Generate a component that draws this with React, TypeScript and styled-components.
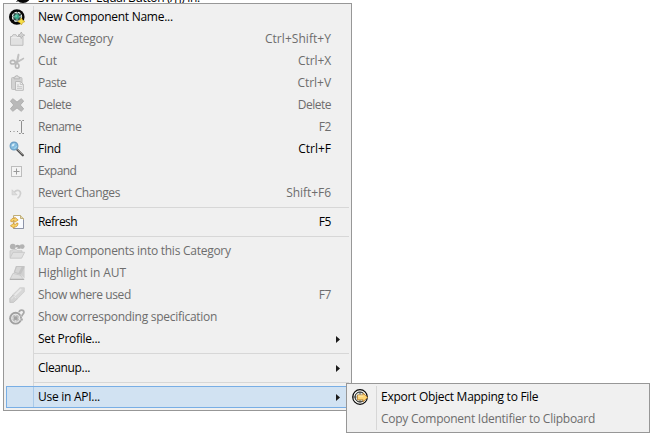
import React from 'react';
import styled, { createGlobalStyle, css } from 'styled-components';

const GlobalStyle = createGlobalStyle`
  body {
    margin: 0;
    background: #fff;
    overflow: hidden;
  }
`;

const Page = styled.main`
  position: relative;
  width: 659px;
  height: 443px;
  overflow: hidden;
  font-family: 'Open Sans', 'Noto Sans', sans-serif;
  font-size: 12px;
  color: #000;
  cursor: default;
  user-select: none;
`;

const TreeLine = styled.div`
  display: flex;
  height: 3px;
  padding-left: 15px;
  overflow: hidden;
`;

const TreeIcon = styled.svg`
  flex: none;
  width: 16px;
  height: 16px;
  margin-top: -13px;
`;

const TreeText = styled.span`
  margin: -11px 0 0 7px;
  line-height: 18px;
  white-space: pre;
  letter-spacing: -0.36px;
`;

const menuPanel = css`
  box-sizing: border-box;
  position: absolute;
  display: flex;
  flex-direction: column;
  padding: 2px;
  border: 1px solid #979797;
  background: #f0f0f0;
`;

const ContextMenu = styled.div`
  ${menuPanel}
  left: 3px;
  top: 3px;
  width: 349px;
  height: 408px;
`;

const SubMenu = styled.div`
  ${menuPanel}
  left: 346px;
  top: 383px;
  width: 304px;
  height: 50px;
`;

const Gutter = styled.span`
  box-sizing: border-box;
  display: flex;
  flex: none;
  align-items: center;
  width: 28px;
  height: 100%;
  padding-left: 3px;
  border-right: 1px solid #d7d7d7;
`;

const Row = styled.div<{ $disabled?: boolean; $selected?: boolean }>`
  box-sizing: border-box;
  display: flex;
  flex: none;
  align-items: center;
  height: 22px;
  color: ${(p) => (p.$disabled ? '#6d6d6d' : '#000')};
  ${(p) =>
    p.$selected &&
    css`
      background: #d1e2f2;
      box-shadow: inset 0 0 0 1px #78aee5;
      ${Gutter} {
        height: 20px;
        border-color: #a9c9e8;
      }
    `}
`;

const Label = styled.span<{ $track: number }>`
  flex: 1;
  padding-left: 4px;
  line-height: 20px;
  white-space: nowrap;
  letter-spacing: ${(p) => p.$track}px;
`;

const Shortcut = styled.span<{ $track: number }>`
  padding-right: 18px;
  line-height: 20px;
  letter-spacing: ${(p) => p.$track}px;
`;

const Arrow = styled.svg`
  flex: none;
  width: 4px;
  height: 7px;
  margin-right: 9px;
  fill: #1a1a1a;
`;

const SeparatorRow = styled.div`
  display: flex;
  flex: none;
  align-items: center;
  height: 7px;
`;

const Rule = styled.span`
  flex: 1;
  height: 1px;
  background: #d7d7d7;
`;

const IconBox = styled.svg`
  flex: none;
  width: 16px;
  height: 16px;
`;

const icons: Record<string, React.ReactNode> = {
  component: (
    <>
      <circle cx="7.8" cy="8" r="7.8" fill="#050505" />
      <circle cx="8" cy="7.8" r="4.6" fill="#31504b" stroke="#f0f5f3" strokeWidth="1.1" strokeDasharray="2.6 1.1" />
      <path d="M8 3v10M3 7.8h10" stroke="#b5c8c3" strokeWidth="1" />
      <circle cx="7.8" cy="7.7" r="2.4" fill="#35aa8a" />
      <circle cx="7.2" cy="7.1" r="1.1" fill="#68cbb0" />
      <path d="M12.3 8.8l1.3 2.3 2.4 1.4-2.4 1.3-1.3 2.2-1.3-2.2-2.4-1.3 2.4-1.4z" fill="#f7df45" stroke="#c29a20" strokeWidth=".6" />
    </>
  ),
  category: (
    <>
      <path d="M1.5 5.5H3l1-1.8h3l1 1.8h6v8.8H1.5z" fill="#e1e1e1" stroke="#bdbdbd" />
      <path d="M2.5 6.7h10.8" stroke="#efefef" />
      <path d="M12.3 1l1 2.2 2.4 1-2.4 1-1 2.3-1-2.3-2.3-1 2.3-1z" fill="#eee" stroke="#aaa" strokeWidth=".8" />
      <path d="M12.3 2.7v3M10.8 4.2h3" stroke="#bbb" strokeWidth=".6" />
    </>
  ),
  cut: (
    <g fill="none" stroke="#b8b8b8">
      <path d="M9.2 1l.9.5-1.4 7.7-1.5.9zM14.7 5l-.2 1.1L7 10.3l-1-.6z" fill="#cdcdcd" strokeWidth=".8" />
      <ellipse cx="3.8" cy="9.2" rx="2.4" ry="1.8" strokeWidth="1.6" />
      <ellipse cx="8.2" cy="13" rx="1.8" ry="2.2" strokeWidth="1.6" />
    </g>
  ),
  paste: (
    <>
      <rect x="2.5" y="2.5" width="10.5" height="12" rx="1" fill="#d2d2d2" stroke="#c0c0c0" />
      <path d="M5 3.8V2h1.3l.5-1.2h2L9.3 2h1.3v1.8z" fill="#dedede" stroke="#afafaf" strokeWidth=".8" />
      <path d="M6.5 6.5h5l2.8 2.8v6H6.5z" fill="#eee" stroke="#b9b9b9" />
      <path d="M11.3 6.5v3h3M8 10h2M8 11.7h5M8 13.4h5" fill="none" stroke="#bcbcbc" strokeWidth=".8" />
    </>
  ),
  delete: (
    <path
      d="M3.9 1.7L8 5.1l4.2-3.4 2.5 2.4L11.3 8l3.4 3.9-2.5 2.4L8 10.9l-4.1 3.4-2.5-2.4L4.7 8 1.4 4.1z"
      fill="#b9b9b9"
      stroke="#ababab"
      strokeWidth=".9"
      strokeLinejoin="round"
    />
  ),
  rename: (
    <>
      <path d="M1 12h1v1H1zM4.5 12h1v1h-1zM8 12h1v1H8z" fill="#888" />
      <path d="M10 1.5h1.5l1 1 1-1H15M12.5 2.5v11M10 14.5h1.5l1-1 1 1H15" fill="none" stroke="#8e8e8e" />
    </>
  ),
  find: (
    <>
      <path d="M7.8 8.3l6 6" stroke="#4b4b4b" strokeWidth="2.2" strokeLinecap="round" />
      <path d="M8.3 8.2l5.3 5.2" stroke="#b4b0aa" strokeWidth=".9" />
      <circle cx="5" cy="5" r="3.9" fill="#83bbdf" stroke="#6b9cc2" strokeWidth="1.1" />
      <path d="M2.6 5.4C2.6 3.5 4 2.4 5.8 2.6L4.9 4.9z" fill="#d7edf8" />
      <path d="M4.8 7.4A3 3 0 0 0 7.5 5" fill="none" stroke="#a9dcf0" strokeWidth="1" />
    </>
  ),
  expand: (
    <>
      <rect x="2.5" y="3.5" width="10" height="10" fill="#f4f4f4" stroke="#bdbdbd" />
      <path d="M4.5 8.5h6M7.5 5.5v6" stroke="#999" />
    </>
  ),
  revert: (
    <>
      <path d="M5.2 7.2C8 3.7 12 5.5 11.5 9c-.3 2.2-1.6 3.4-3 4.4" fill="none" stroke="#cfcfcf" strokeWidth="1.7" />
      <path d="M3.1 4.8v5h5z" fill="#dcdcdc" stroke="#cacaca" strokeWidth=".7" />
    </>
  ),
  refresh: (
    <>
      <path d="M4.5 1.5h7l3 3v10h-10z" fill="#f9fbff" stroke="#bfae78" />
      <path d="M11.5 1.5v3h3" fill="#e7dba7" stroke="#b2a06c" strokeWidth=".8" />
      <path d="M4.5 14.5h10V6" fill="none" stroke="#828db5" strokeWidth=".8" />
      <path d="M1.6 7.3C1.8 4.6 4 3.8 5.6 4.6l.1-1.4L9.2 6 5.6 8.3V6.8C4.4 6.3 3.5 6.8 3.4 8z" fill="#f7d568" stroke="#cb8d2b" strokeWidth=".7" />
      <path d="M9 9.1c.2 3-1.9 4.3-3.8 3.7v1.4L1.4 11.8l3.8-2.7v1.6c1.2.3 1.9-.3 2-1.5z" fill="#f7d568" stroke="#cb8d2b" strokeWidth=".7" />
    </>
  ),
  map: (
    <>
      <circle cx="3.8" cy="3.6" r="2.9" fill="#b3b3b3" />
      <path d="M6.5 2.6q2.2-1.6 4 0l1-1v4.2H7.8L9 4.6Q7.8 3.8 6.5 4.4z" fill="#acacac" />
      <circle cx="13.2" cy="3.6" r="2.4" fill="#b3b3b3" />
      <path d="M1 14.6V7.7h2.2L4.4 6.5h3l1 1.2h4.6v2" fill="#dadada" stroke="#c6c6c6" strokeWidth=".8" />
      <path d="M1 15.2L4 9.3h11.6l-3 5.9z" fill="#e0e0e0" stroke="#c4c4c4" strokeWidth=".8" />
    </>
  ),
  highlight: (
    <>
      <path d="M7 1h8.6v12.6L11.4 9.8 5 7.8z" fill="#d0d0d0" />
      <path d="M7 1L4.6 7.6l6.8 2.2L15.4 3V1z" fill="#c3c3c3" />
      <path d="M7.8 2L6.2 6.9l3.3 1L12.6 2z" fill="#d5d5d5" />
      <path d="M4 8.3l7.2 1.8 3.3 4.1H1z" fill="#dedede" stroke="#c1c1c1" strokeWidth=".8" />
      <path d="M.8 14.4h14.4" stroke="#adadad" />
    </>
  ),
  where: (
    <>
      <path d="M10.9.8h4.4v4L8 12.2 3.6 8z" fill="#d8d8d8" stroke="#c9c9c9" strokeWidth=".7" />
      <path d="M12.2 2.2L5.8 8.3" stroke="#e9e9e9" strokeWidth="1.8" />
      <path d="M4 8l4.2 4.1-3.7 3.3H.8v-4z" fill="#d2d2d2" stroke="#c0c0c0" strokeWidth=".8" />
      <path d="M4.6 8.8l2.8 2.7M2.4 12l2.2-2.1" stroke="#e9e9e9" />
    </>
  ),
  spec: (
    <>
      <circle cx="6.6" cy="9.2" r="6.4" fill="#a0a0a0" />
      <circle cx="6.7" cy="9.2" r="4" fill="#bdbdbd" stroke="#e9e9e9" strokeWidth="1.1" />
      <path d="M6.7 5.2v8M2.7 9.2h8" stroke="#e0e0e0" />
      <circle cx="6.7" cy="9.2" r="1.9" fill="#a2a2a2" />
      <path d="M10 3.3Q10.3 1 12.7 1q2.6 0 2.6 2.3c0 2-2.2 2-2.2 4.1M13.1 9.5v2" fill="none" stroke="#efefef" strokeWidth="3.2" />
      <path d="M10.2 3.3Q10.3 1.2 12.6 1.2q2.3 0 2.3 2c0 2-2 2-2 4.2M12.9 9.5v2" fill="none" stroke="#a8a8a8" strokeWidth="1.8" />
    </>
  ),
  export: (
    <>
      <circle cx="8" cy="8" r="7.3" fill="#f5f5f1" stroke="#080808" strokeWidth="1.2" />
      <circle cx="8" cy="8" r="5" fill="#dde5e0" stroke="#161616" strokeWidth="1" />
      <path d="M8 3v2.6M8 11v2.4M1 8h3.5" stroke="#333" strokeWidth=".8" />
      <path d="M5.5 6h5.6V4L15.6 8.4 11.1 12.8v-2H5.5z" fill="#ffd675" stroke="#b67a28" strokeWidth=".8" />
      <path d="M6.2 7h5" stroke="#fff3bf" />
    </>
  ),
};

interface Item {
  label: string;
  track: number;
  icon?: string;
  keys?: string;
  keyTrack?: number;
  disabled?: boolean;
  selected?: boolean;
  submenu?: boolean;
}

const groups: Item[][] = [
  [
    { label: 'New Component Name...', track: -0.27, icon: 'component' },
    { label: 'New Category', track: -0.26, icon: 'category', keys: 'Ctrl+Shift+Y', keyTrack: 0.05, disabled: true },
    { label: 'Cut', track: -0.1, icon: 'cut', keys: 'Ctrl+X', keyTrack: -0.1, disabled: true },
    { label: 'Paste', track: -0.45, icon: 'paste', keys: 'Ctrl+V', keyTrack: -0.05, disabled: true },
    { label: 'Delete', track: -0.5, icon: 'delete', keys: 'Delete', keyTrack: -0.5, disabled: true },
    { label: 'Rename', track: -0.45, icon: 'rename', keys: 'F2', keyTrack: -0.4, disabled: true },
    { label: 'Find', track: -0.25, icon: 'find', keys: 'Ctrl+F', keyTrack: 0 },
    { label: 'Expand', track: -0.55, icon: 'expand', disabled: true },
    { label: 'Revert Changes', track: -0.36, icon: 'revert', keys: 'Shift+F6', keyTrack: -0.05, disabled: true },
  ],
  [{ label: 'Refresh', track: -0.55, icon: 'refresh', keys: 'F5', keyTrack: -0.4 }],
  [
    { label: 'Map Components into this Category', track: -0.26, icon: 'map', disabled: true },
    { label: 'Highlight in AUT', track: -0.1, icon: 'highlight', disabled: true },
    { label: 'Show where used', track: -0.4, icon: 'where', keys: 'F7', keyTrack: -0.4, disabled: true },
    { label: 'Show corresponding specification', track: -0.28, icon: 'spec', disabled: true },
    { label: 'Set Profile...', track: -0.3, submenu: true },
  ],
  [{ label: 'Cleanup...', track: -0.35, submenu: true }],
  [{ label: 'Use in API...', track: -0.27, submenu: true, selected: true }],
];

const exportItems: Item[] = [
  { label: 'Export Object Mapping to File', track: -0.27, icon: 'export' },
  { label: 'Copy Component Identifier to Clipboard', track: -0.25, disabled: true },
];

function MenuItem({ item }: { item: Item }) {
  return (
    <Row $disabled={item.disabled} $selected={item.selected}>
      <Gutter>{item.icon && <IconBox viewBox="0 0 16 16">{icons[item.icon]}</IconBox>}</Gutter>
      <Label $track={item.track}>{item.label}</Label>
      {item.keys && <Shortcut $track={item.keyTrack ?? 0}>{item.keys}</Shortcut>}
      {item.submenu && (
        <Arrow viewBox="0 0 4 7">
          <path d="M0 0l4 3.5L0 7z" />
        </Arrow>
      )}
    </Row>
  );
}

export default function App() {
  return (
    <>
      <GlobalStyle />
      <Page>
        <TreeLine>
          <TreeIcon viewBox="0 0 16 16">
            <circle cx="8" cy="8" r="8" fill="#050505" />
            <path d="M1 14.5h2" stroke="#888" />
          </TreeIcon>
          <TreeText>SWTAdder Equal Button (/[]) in:</TreeText>
        </TreeLine>
        <ContextMenu>
          {groups.map((group, index) => (
            <React.Fragment key={index}>
              {index > 0 && (
                <SeparatorRow>
                  <Gutter />
                  <Rule />
                </SeparatorRow>
              )}
              {group.map((item) => (
                <MenuItem key={item.label} item={item} />
              ))}
            </React.Fragment>
          ))}
        </ContextMenu>
        <SubMenu>
          {exportItems.map((item) => (
            <MenuItem key={item.label} item={item} />
          ))}
        </SubMenu>
      </Page>
    </>
  );
}
